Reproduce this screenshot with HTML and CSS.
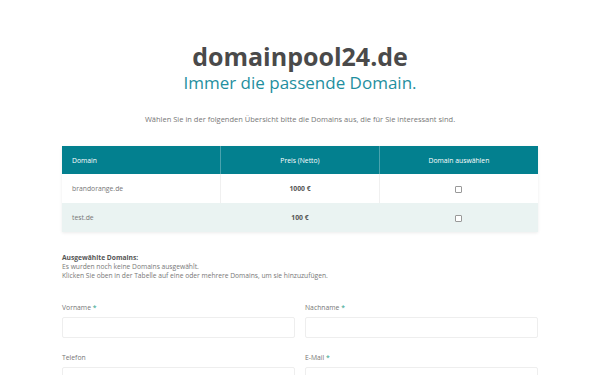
FILE: index.html
```html
<!DOCTYPE html>
<html lang="de">
<head>
    <meta charset="UTF-8">
    <meta name="viewport" content="width=device-width, initial-scale=1.0">
    <title>domainpool24.de</title>
    <link rel="stylesheet" href="styles.css">
</head>
<body>
    <div class="wrap">
        <h1>domainpool24.de</h1>
        <h2>Immer die passende Domain.</h2>
        <p class="intro">Wählen Sie in der folgenden Übersicht bitte die Domains aus, die für Sie interessant sind.</p>

        <table class="domains">
            <thead>
                <tr>
                    <th class="left">Domain</th>
                    <th>Preis (Netto)</th>
                    <th>Domain auswählen</th>
                </tr>
            </thead>
            <tbody>
                <tr>
                    <td class="left">brandorange.de</td>
                    <td class="price">1000 €</td>
                    <td><span class="check"></span></td>
                </tr>
                <tr class="alt">
                    <td class="left">test.de</td>
                    <td class="price">100 €</td>
                    <td><span class="check"></span></td>
                </tr>
            </tbody>
        </table>

        <div class="selected">
            <strong>Ausgewählte Domains:</strong><br>
            Es wurden noch keine Domains ausgewählt.<br>
            Klicken Sie oben in der Tabelle auf eine oder mehrere Domains, um sie hinzuzufügen.
        </div>

        <form class="contact">
            <div class="field">
                <label>Vorname <span class="req">*</span></label>
                <input type="text">
            </div>
            <div class="field">
                <label>Nachname <span class="req">*</span></label>
                <input type="text">
            </div>
            <div class="field">
                <label>Telefon</label>
                <input type="text">
            </div>
            <div class="field">
                <label>E-Mail <span class="req">*</span></label>
                <input type="text">
            </div>
        </form>
    </div>
</body>
</html>
```

FILE: styles.css
```css
body {
    margin: 0;
    font-family: "Open Sans", Arial, sans-serif;
    background-color: #fff;
    color: #777;
}
.wrap {
    width: 476px;
    margin: 0 auto;
    padding-top: 41px;
}
h1 {
    margin: 0;
    text-align: center;
    font-size: 25px;
    line-height: 30px;
    font-weight: 700;
    color: #4a4a4a;
}
h2 {
    margin: 0;
    text-align: center;
    font-size: 17px;
    line-height: 24px;
    font-weight: 400;
    color: #1f8fa0;
}
.intro {
    margin: 19px 0 0;
    text-align: center;
    font-size: 7.5px;
    line-height: 10px;
}
.domains {
    width: 100%;
    margin-top: 22px;
    border-collapse: collapse;
    table-layout: fixed;
    font-size: 6.8px;
    box-shadow: 0 1px 3px rgba(0, 0, 0, 0.08);
}
.domains th {
    height: 28px;
    padding: 0 10px;
    background-color: #03808f;
    color: #fff;
    font-weight: 400;
    text-align: center;
    border-left: 1px solid #4aa3ae;
}
.domains th:first-child {
    border-left: none;
}
.domains td {
    height: 29px;
    padding: 0 10px;
    text-align: center;
    border-left: 1px solid #f0f0f0;
}
.domains td:first-child {
    border-left: none;
}
.domains .left {
    text-align: left;
}
.domains .price {
    font-weight: 700;
    color: #555;
}
.domains .alt td {
    background-color: #eaf3f2;
    border-left-color: #eaf3f2;
}
.check {
    display: inline-block;
    width: 5px;
    height: 5px;
    border: 1px solid #999;
    border-radius: 1px;
    background: #fff;
    vertical-align: middle;
}
.selected {
    margin-top: 21px;
    font-size: 6.7px;
    line-height: 9px;
}
.selected strong {
    color: #555;
}
.contact {
    display: grid;
    grid-template-columns: 1fr 1fr;
    column-gap: 10px;
    row-gap: 15px;
    margin-top: 23px;
}
.field label {
    display: block;
    font-size: 6.8px;
    line-height: 9px;
    margin-bottom: 5px;
}
.req {
    color: #2aa08a;
}
.field input {
    display: block;
    box-sizing: border-box;
    width: 100%;
    height: 21px;
    border: 1px solid #eee;
    border-radius: 2px;
    background: #fff;
}
```
